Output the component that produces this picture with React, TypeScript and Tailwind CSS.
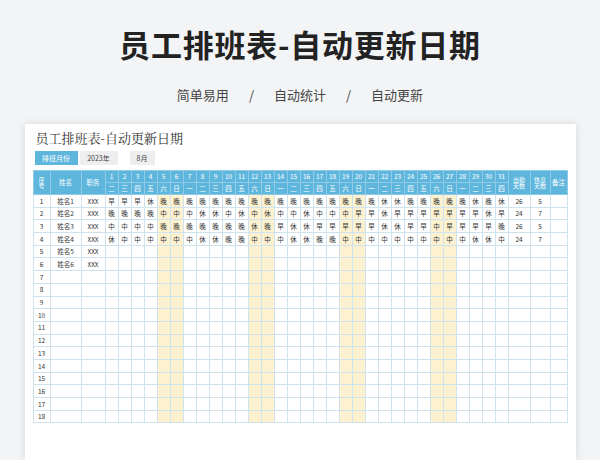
const WEEK = ['日', '一', '二', '三', '四', '五', '六']
const SHIFTS = [
  '早早早休晚晚晚晚晚晚晚晚晚晚晚晚晚晚晚晚晚休休晚晚晚晚晚休晚休',
  '晚晚晚晚中中中休休中休中休中中休中中中早早休早早早早早早早休早',
  '中中中中晚晚晚晚晚晚晚休晚早休休早早早早早休休早早中早早早早晚',
  '休中中中中中中休休晚晚中中中休休晚晚中中中中中中中中中中休休中',
]
const STATS = [
  ['26', '5'],
  ['24', '7'],
  ['26', '5'],
  ['24', '7'],
]
const days = Array.from({ length: 31 }, (_, i) => i + 1)
const weekday = (d: number) => WEEK[(d + 1) % 7]
const isWeekend = (d: number) => [0, 6].includes((d + 1) % 7)

const cell = 'border border-[#cfe3ee] text-center p-0 leading-none overflow-hidden'
const head = 'border border-[#8fcbe6] bg-[#5fb6dd] text-white text-center p-0 leading-[1] font-normal overflow-hidden'

export default function App() {
  return (
    <div
      className="w-[600px] h-[460px] overflow-hidden bg-[#f3f4f6] flex flex-col items-center"
      style={{ fontFamily: '"Noto Sans CJK SC", sans-serif' }}
    >
      <h1 className="mt-[24px] text-[31px] font-bold text-[#222] tracking-wide leading-[40px]">员工排班表-自动更新日期</h1>
      <div className="mt-[22px] flex gap-[20px] text-[13px] text-[#444] leading-[18px]">
        <span>简单易用</span>
        <span>/</span>
        <span>自动统计</span>
        <span>/</span>
        <span>自动更新</span>
      </div>

      <div className="mt-[20px] w-[551px] flex-1 bg-white shadow-[0_0_8px_rgba(0,0,0,0.12)] px-[8px] pt-[6px]">
        <div
          className="text-[13px] text-[#333] leading-[16px] pl-[3px]"
          style={{ fontFamily: '"Noto Serif CJK SC", "Noto Sans CJK SC", serif' }}
        >
          员工排班表-自动更新日期
        </div>
        <div className="mt-[5px] flex items-center text-[7px] h-[14px]">
          <div className="w-[43px] h-full bg-[#5fb6dd] text-white flex items-center justify-center ml-[2px]">排班月份</div>
          <div className="w-[38px] h-full bg-[#eeeeee] text-[#444] flex items-center justify-center ml-[2px]">2023年</div>
          <div className="w-[25px] h-full bg-[#eeeeee] text-[#444] flex items-center justify-center ml-[12px]">8月</div>
        </div>

        <table className="mt-[5px] table-fixed border-collapse text-[6.5px] text-[#333]">
          <colgroup>
            <col className="w-[17px]" />
            <col className="w-[31px]" />
            <col className="w-[24px]" />
            {days.map((d) => (
              <col key={d} className="w-[13px]" />
            ))}
            <col className="w-[22px]" />
            <col className="w-[20px]" />
            <col className="w-[17px]" />
          </colgroup>
          <thead>
            <tr className="h-[12px]">
              <th rowSpan={2} className={`${head} text-[6px]`}>序<br />号</th>
              <th rowSpan={2} className={head}>姓名</th>
              <th rowSpan={2} className={head}>职务</th>
              {days.map((d) => (
                <th key={d} className={head}>{d}</th>
              ))}
              <th rowSpan={2} className={`${head} text-[6px]`}>出勤<br />天数</th>
              <th rowSpan={2} className={`${head} text-[6px]`}>休息<br />天数</th>
              <th rowSpan={2} className={head}>备注</th>
            </tr>
            <tr className="h-[12px]">
              {days.map((d) => (
                <th key={d} className={head}>{weekday(d)}</th>
              ))}
            </tr>
          </thead>
          <tbody>
            {Array.from({ length: 18 }, (_, r) => (
              <tr key={r} className="h-[12.7px]">
                <td className={cell}>{r + 1}</td>
                <td className={cell}>{r < 6 ? `姓名${r + 1}` : ''}</td>
                <td className={cell}>{r < 6 ? 'XXX' : ''}</td>
                {days.map((d) => (
                  <td key={d} className={`${cell} ${isWeekend(d) ? 'bg-[#fdf1cf]' : ''}`}>
                    {SHIFTS[r]?.[d - 1] ?? ''}
                  </td>
                ))}
                <td className={cell}>{STATS[r]?.[0] ?? ''}</td>
                <td className={cell}>{STATS[r]?.[1] ?? ''}</td>
                <td className={cell}></td>
              </tr>
            ))}
          </tbody>
        </table>
      </div>
    </div>
  )
}
